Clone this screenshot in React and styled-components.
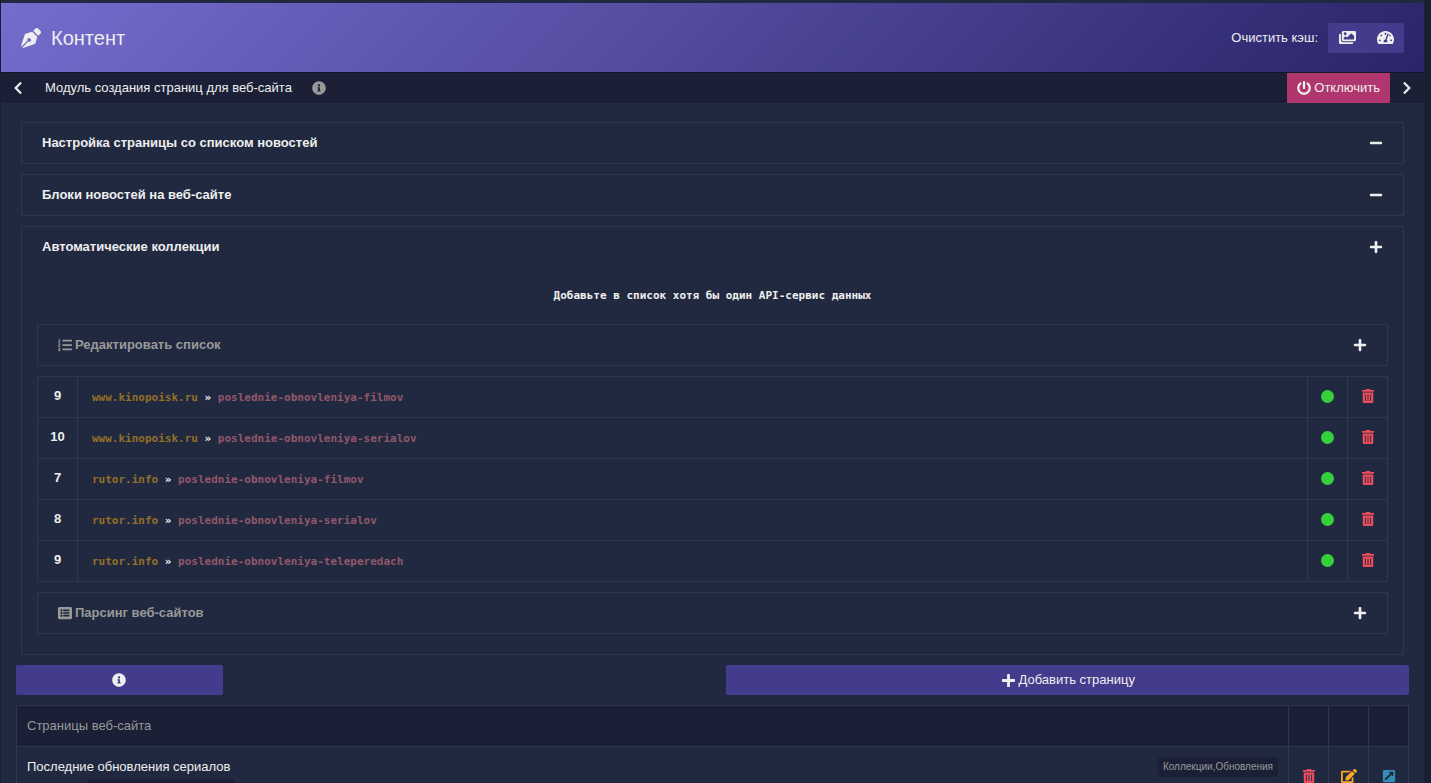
import React, { useState } from "react";
import styled, { createGlobalStyle } from "styled-components";
import {
  FaChevronLeft,
  FaChevronRight,
  FaEdit,
  FaExternalLinkSquareAlt,
  FaImages,
  FaInfoCircle,
  FaListAlt,
  FaListOl,
  FaMinus,
  FaPenNib,
  FaPlus,
  FaPowerOff,
  FaTachometerAlt,
  FaTrashAlt,
} from "react-icons/fa";

const GlobalStyle = createGlobalStyle`
  * {
    box-sizing: border-box;
  }

  body {
    margin: 0;
    overflow: hidden;
    background: #1b1f35;
    color: #eeeeee;
    font: 13px/20px "Liberation Sans", Arial, sans-serif;
  }

  button {
    padding: 0;
    border: 0;
    color: inherit;
    font: inherit;
    cursor: pointer;
  }

  svg {
    display: block;
    flex: none;
  }
`;

const Page = styled.div`
  height: 100vh;
  overflow: hidden;
  margin-right: 7px;
  padding-top: 3px;
  border-left: 1px solid #191d32;
  background: #212940;
`;

const Header = styled.header`
  display: flex;
  align-items: center;
  justify-content: space-between;
  height: 69px;
  padding: 0 20px;
  background: linear-gradient(135deg, #756dcd, #2a2469);
`;

const Title = styled.h1`
  display: flex;
  align-items: center;
  gap: 10px;
  margin: 0;
  font-size: 20px;
  font-weight: normal;
`;

const CacheTools = styled.div`
  display: flex;
  align-items: center;
  gap: 10px;
`;

const CacheButtons = styled.div`
  display: flex;
  border-radius: 2px;
  overflow: hidden;
`;

const IconButton = styled.button`
  display: flex;
  align-items: center;
  justify-content: center;
  width: 38px;
  height: 30px;
  background: #433b8b;
`;

const SubBar = styled.nav`
  display: flex;
  align-items: flex-start;
  height: 30px;
  border-top: 1px solid #14172a;
  border-bottom: 1px solid #14172a;
  background: #1b2037;
  line-height: 30px;
`;

const NavButton = styled.button`
  display: flex;
  align-items: center;
  justify-content: center;
  width: 34px;
  height: 30px;
  background: none;
`;

const ModuleName = styled.span`
  margin: 0 20px 0 10px;
`;

const HelpButton = styled.button`
  display: flex;
  align-items: center;
  height: 30px;
  background: none;
  color: #999999;
`;

// one pixel taller than the bar, covers its bottom border
const DisableButton = styled.button`
  display: flex;
  align-items: center;
  gap: 3px;
  height: 30px;
  margin-left: auto;
  padding: 0 10px;
  background: #b0376d;
`;

const Content = styled.main`
  padding: 20px 15px;
`;

const Panels = styled.div`
  display: flex;
  flex-direction: column;
  gap: 10px;
  padding: 0 5px;
`;

const Panel = styled.section`
  border: 1px solid #30374d;
`;

const PanelHead = styled.button`
  display: flex;
  align-items: center;
  justify-content: space-between;
  width: 100%;
  height: 40px;
  padding: 0 20px;
  background: none;
  font-weight: bold;
  ${(props) => props.$muted && "color: #999999;"}
`;

const PanelLabel = styled.span`
  display: flex;
  align-items: center;
  gap: 3px;
`;

const Sign = styled.span`
  color: #eeeeee;
`;

const PanelBody = styled.div`
  display: flex;
  flex-direction: column;
  gap: 10px;
  padding: 19px 15px 20px;
`;

const Notice = styled.p`
  margin: 0 0 8px;
  text-align: center;
  font: bold 11px/20px "DejaVu Sans Mono", monospace;
`;

const Table = styled.table`
  width: 100%;
  border-collapse: collapse;
  table-layout: fixed;
`;

const Cell = styled.td`
  height: 41px;
  padding: ${(props) => (props.$icon ? "0 0 2px" : "0 14px")};
  border: 1px solid #30374d;
  ${(props) => props.$icon && "width: 40px; text-align: center; font-weight: bold;"}

  svg,
  button {
    margin: 0 auto;
  }
`;

const Source = styled.div`
  padding-top: 2px;
  font: bold 11px/20px "DejaVu Sans Mono", monospace;
`;

const Site = styled.a`
  color: #936f26;
  text-decoration: none;
`;

const Slug = styled.span`
  color: #925769;
`;

const Dot = styled.button`
  display: block;
  width: 13px;
  height: 13px;
  border-radius: 50%;
  background: #35d03b;
`;

const ActionButton = styled.button`
  display: block;
  background: none;
  color: ${(props) => props.$color};
`;

const Actions = styled.div`
  display: flex;
  justify-content: space-between;
  margin: 10px 0;
`;

const WideButton = styled.button`
  display: flex;
  align-items: center;
  justify-content: center;
  gap: 3px;
  width: ${(props) => props.$width};
  height: 30px;
  border-radius: 2px;
  background: #433b8b;
`;

const HeadCell = styled.th`
  height: 41px;
  padding: 0 10px;
  border: 1px solid #30374d;
  background: #1b2037;
  color: #999999;
  font-weight: normal;
  text-align: left;
  ${(props) => props.$icon && "width: 40px;"}
`;

const PageCell = styled.td`
  padding: 10px 10px 8px;
  border: 1px solid #30374d;
`;

const PageLine = styled.div`
  display: flex;
  align-items: center;
  justify-content: space-between;
`;

const UrlLine = styled.div`
  display: flex;
  gap: 38px;
  margin-top: 2px;
  color: #999999;
  font-size: 10px;
`;

const Tag = styled.span`
  padding: 0 5px;
  border-radius: 3px;
  background: #1b2037;
  color: #999999;
  font-size: 10px;
`;

const sources = [
  { num: 9, site: "www.kinopoisk.ru", slug: "poslednie-obnovleniya-filmov" },
  { num: 10, site: "www.kinopoisk.ru", slug: "poslednie-obnovleniya-serialov" },
  { num: 7, site: "rutor.info", slug: "poslednie-obnovleniya-filmov" },
  { num: 8, site: "rutor.info", slug: "poslednie-obnovleniya-serialov" },
  { num: 9, site: "rutor.info", slug: "poslednie-obnovleniya-teleperedach" },
];

const Accordion = ({ title, icon, muted, sign, children }) => {
  const [open, setOpen] = useState(true);

  return (
    <Panel>
      <PanelHead $muted={muted} onClick={() => setOpen(!open)}>
        <PanelLabel>
          {icon}
          {title}
        </PanelLabel>
        <Sign>{sign === "plus" ? <FaPlus size={14} /> : <FaMinus size={14} />}</Sign>
      </PanelHead>
      {open && children}
    </Panel>
  );
};

const SourceTable = () => (
  <Table>
    <tbody>
      {sources.map((row) => (
        <tr key={row.site + row.slug}>
          <Cell $icon>{row.num}</Cell>
          <Cell>
            <Source>
              <Site href={`#${row.site}`}>{row.site}</Site> » <Slug>{row.slug}</Slug>
            </Source>
          </Cell>
          <Cell $icon>
            <Dot aria-label="Включено" />
          </Cell>
          <Cell $icon>
            <ActionButton $color="#ee4d5b" aria-label="Удалить">
              <FaTrashAlt size={14} />
            </ActionButton>
          </Cell>
        </tr>
      ))}
    </tbody>
  </Table>
);

const PagesTable = () => (
  <Table>
    <thead>
      <tr>
        <HeadCell>Страницы веб-сайта</HeadCell>
        <HeadCell $icon />
        <HeadCell $icon />
        <HeadCell $icon />
      </tr>
    </thead>
    <tbody>
      <tr>
        <PageCell>
          <PageLine>
            Последние обновления сериалов
            <Tag>Коллекции,Обновления</Tag>
          </PageLine>
          <UrlLine>
            URL: <Tag>poslednie-obnovleniya-serialov</Tag>
          </UrlLine>
        </PageCell>
        <Cell $icon>
          <ActionButton $color="#ee4d5b" aria-label="Удалить">
            <FaTrashAlt size={14} />
          </ActionButton>
        </Cell>
        <Cell $icon>
          <ActionButton $color="#ffa726" aria-label="Изменить">
            <FaEdit size={16} />
          </ActionButton>
        </Cell>
        <Cell $icon>
          <ActionButton $color="#348db5" aria-label="Открыть">
            <FaExternalLinkSquareAlt size={14} />
          </ActionButton>
        </Cell>
      </tr>
    </tbody>
  </Table>
);

const App = () => (
  <>
    <GlobalStyle />
    <Page>
      <Header>
        <Title>
          <FaPenNib size={20} />
          Контент
        </Title>
        <CacheTools>
          Очистить кэш:
          <CacheButtons>
            <IconButton aria-label="Изображения">
              <FaImages size={17} />
            </IconButton>
            <IconButton aria-label="Данные">
              <FaTachometerAlt size={17} />
            </IconButton>
          </CacheButtons>
        </CacheTools>
      </Header>
      <SubBar>
        <NavButton aria-label="Назад">
          <FaChevronLeft size={14} />
        </NavButton>
        <ModuleName>Модуль создания страниц для веб-сайта</ModuleName>
        <HelpButton aria-label="Справка">
          <FaInfoCircle size={14} />
        </HelpButton>
        <DisableButton>
          <FaPowerOff size={14} />
          Отключить
        </DisableButton>
        <NavButton aria-label="Вперёд">
          <FaChevronRight size={14} />
        </NavButton>
      </SubBar>
      <Content>
        <Panels>
          <Accordion title="Настройка страницы со списком новостей" />
          <Accordion title="Блоки новостей на веб-сайте" />
          <Accordion title="Автоматические коллекции" sign="plus">
            <PanelBody>
              <Notice>Добавьте в список хотя бы один API-сервис данных</Notice>
              <Accordion title="Редактировать список" icon={<FaListOl size={14} />} muted sign="plus" />
              <SourceTable />
              <Accordion title="Парсинг веб-сайтов" icon={<FaListAlt size={14} />} muted sign="plus" />
            </PanelBody>
          </Accordion>
        </Panels>
        <Actions>
          <WideButton $width="calc(15% - 2px)" aria-label="Информация">
            <FaInfoCircle size={14} />
          </WideButton>
          <WideButton $width="49%">
            <FaPlus size={15} />
            Добавить страницу
          </WideButton>
        </Actions>
        <PagesTable />
      </Content>
    </Page>
  </>
);

export default App;
